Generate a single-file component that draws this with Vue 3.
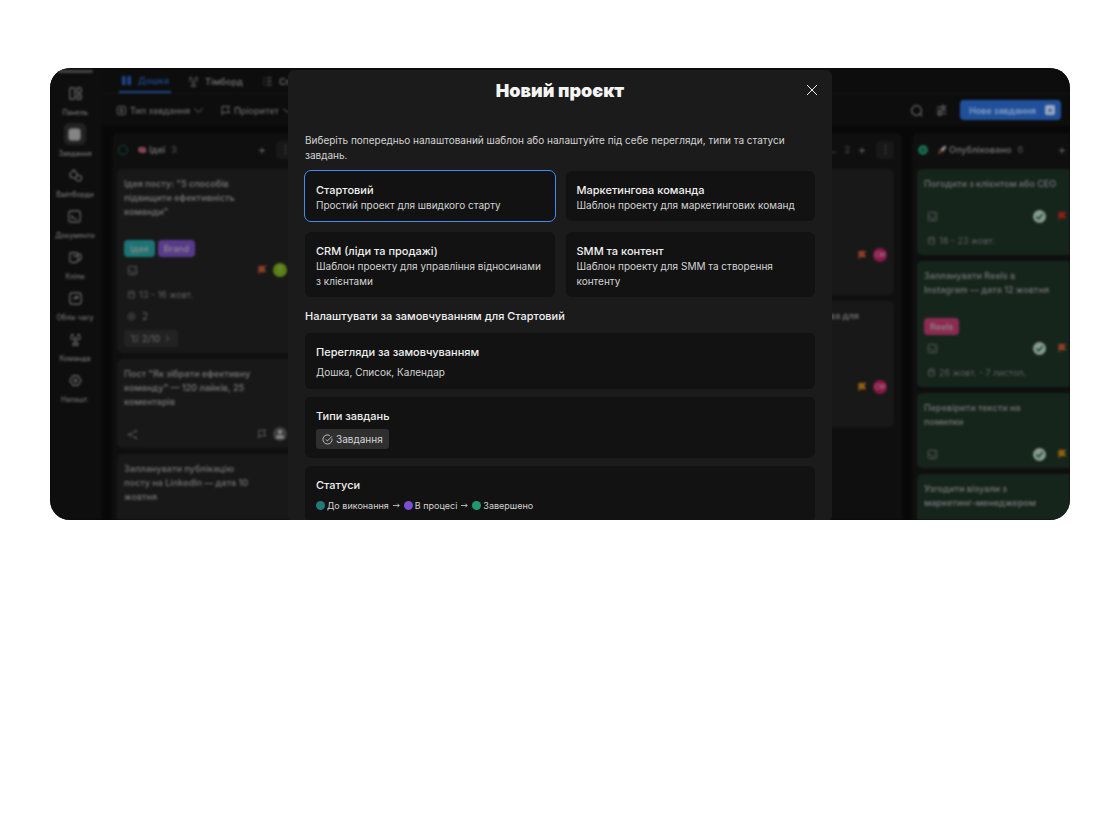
<template>
  <main class="window">
    <div class="app">
      <nav class="sidebar">
        <span class="workspace"></span>
        <a
          v-for="item in navItems"
          :key="item.label"
          href="#"
          class="nav-item"
          :class="{ active: item.active }"
        >
          <span class="nav-icon">
            <svg viewBox="0 0 16 16" class="icon large"><path :d="icons[item.icon]" /></svg>
          </span>
          <span>{{ item.label }}</span>
        </a>
      </nav>

      <div class="content">
        <div class="tabs">
          <button v-for="tab in tabs" :key="tab.label" class="tab" :class="{ active: tab.active }">
            <svg viewBox="0 0 16 16" class="icon"><path :d="icons[tab.icon]" /></svg>
            {{ tab.label }}
          </button>
        </div>

        <div class="toolbar">
          <button class="filter">
            <svg viewBox="0 0 16 16" class="icon"><path :d="icons.grid" /></svg>
            Тип завдання
            <svg viewBox="0 0 16 16" class="icon"><path :d="icons.down" /></svg>
          </button>
          <button class="filter">
            <svg viewBox="0 0 16 16" class="icon"><path :d="icons.flag" /></svg>
            Пріоритет
            <svg viewBox="0 0 16 16" class="icon"><path :d="icons.down" /></svg>
          </button>
          <div class="toolbar-right">
            <button class="icon-button" aria-label="Пошук">
              <svg viewBox="0 0 16 16" class="icon large"><path :d="icons.search" /></svg>
            </button>
            <button class="icon-button" aria-label="Налаштування">
              <svg viewBox="0 0 16 16" class="icon large"><path :d="icons.sliders" /></svg>
            </button>
            <button class="new-task">
              Нове завдання
              <span class="new-task-plus">+</span>
            </button>
          </div>
        </div>

        <div class="board">
          <section v-for="column in columns" :key="column.id" class="column" :class="column.kind">
            <header v-if="column.title" class="column-header">
              <span v-if="column.emoji" class="ring"></span>
              <svg v-if="column.emoji === 'brain'" viewBox="0 0 16 16" class="emoji">
                <path fill="#8e4a57" d="M2 9C1 5 4 2 8 3c4-1 7 2 7 6 0 3-3 4-5 3l-1 2-2-2c-3 0-5-1-5-3z" />
                <path fill="none" stroke="#5c2633" d="M4 8c2-2 3 1 5-1s3 1 4 0M6 5c2-1 3 1 5 0" />
              </svg>
              <svg v-if="column.emoji === 'rocket'" viewBox="0 0 16 16" class="emoji">
                <path fill="#8a8a8a" d="M15 1c-5 0-8 3-10 7l3 3c4-2 7-5 7-10z" />
                <path fill="#8e2f2f" d="M6 6L2 8l3 1zM10 10l-2 4-1-3z" />
                <path fill="#a8701c" d="M4 10l-3 5 5-3z" />
              </svg>
              <span class="column-title">{{ column.title }}</span>
              <span class="column-count">{{ column.count }}</span>
              <button class="column-add" aria-label="Додати">+</button>
              <button class="column-menu" aria-label="Меню">
                <svg viewBox="0 0 16 16" class="icon"><path :d="icons.dots" /></svg>
              </button>
            </header>

            <article v-for="(card, i) in column.cards" :key="i" class="card">
              <h4 class="card-title">{{ card.title }}</h4>
              <div v-if="card.tags" class="tags">
                <span v-for="tag in card.tags" :key="tag.name" class="tag" :class="tag.color">{{ tag.name }}</span>
              </div>
              <div v-if="card.flag" class="card-row">
                <svg viewBox="0 0 16 16" class="icon"><path :d="icons[card.icon || 'image']" /></svg>
                <span v-if="column.kind === 'done'" class="check">
                  <svg viewBox="0 0 16 16"><path d="M4 8l3 3 5-6" /></svg>
                </span>
                <svg viewBox="0 0 16 16" class="icon flag" :class="card.flag"><path :d="icons.flag" /></svg>
                <span class="avatar" :class="card.avatar">
                  <svg v-if="card.avatar === 'grey'" viewBox="0 0 16 16">
                    <path d="M8 3a2 2 0 010 5 2 2 0 010-5zM3 13c0-5 10-5 10 0z" />
                  </svg>
                  <template v-else>{{ card.initials }}</template>
                </span>
              </div>
              <div v-if="card.date" class="card-date">
                <svg viewBox="0 0 16 16" class="icon small"><path :d="icons.calendar" /></svg>
                {{ card.date }}
              </div>
              <div v-if="card.points" class="card-points">
                <svg viewBox="0 0 16 16" class="icon small"><path :d="icons.target" /></svg>
                {{ card.points }}
              </div>
              <button v-if="card.subtasks" class="subtasks">
                <svg viewBox="0 0 16 16" class="icon small"><path :d="icons.tree" /></svg>
                {{ card.subtasks }}
                <svg viewBox="0 0 16 16" class="icon small"><path :d="icons.right" /></svg>
              </button>
            </article>
          </section>
        </div>
      </div>
    </div>

    <div class="overlay">
      <div class="modal" role="dialog" aria-labelledby="modal-title">
        <header class="modal-header">
          <h2 id="modal-title">Новий проєкт</h2>
          <button class="close" aria-label="Закрити">
            <svg viewBox="0 0 12 12"><path d="M1 1l10 10M11 1L1 11" /></svg>
          </button>
        </header>

        <p class="intro">
          Виберіть попередньо налаштований шаблон або налаштуйте під себе перегляди, типи та статуси завдань.
        </p>

        <div class="templates">
          <button
            v-for="template in templates"
            :key="template.name"
            class="template"
            :class="{ selected: template.name === selected }"
            :aria-pressed="template.name === selected"
            @click="selected = template.name"
          >
            <span class="template-name">{{ template.name }}</span>
            <span class="template-text">{{ template.text }}</span>
          </button>
        </div>

        <h3 class="defaults-title">Налаштувати за замовчуванням для {{ selected }}</h3>

        <div class="defaults">
          <section class="panel">
            <h4>Перегляди за замовчуванням</h4>
            <p>Дошка, Список, Календар</p>
          </section>
          <section class="panel">
            <h4>Типи завдань</h4>
            <span class="chip">
              <svg viewBox="0 0 12 12">
                <path d="M10.9 5A5 5 0 118.6 1.7M4 5.8l1.8 1.8L11 2.4" />
              </svg>
              Завдання
            </span>
          </section>
          <section class="panel">
            <h4>Статуси</h4>
            <div class="statuses">
              <template v-for="(status, i) in statuses" :key="status.name">
                <svg v-if="i > 0" class="arrow" viewBox="0 0 8 8"><path d="M0 4h7M5 2l2 2-2 2" /></svg>
                <span class="status"><i class="dot" :class="status.color"></i>{{ status.name }}</span>
              </template>
            </div>
          </section>
        </div>
      </div>
    </div>
  </main>
</template>

<script setup>
import { ref } from 'vue'

const selected = ref('Стартовий')

const templates = [
  { name: 'Стартовий', text: 'Простий проект для швидкого старту' },
  { name: 'Маркетингова команда', text: 'Шаблон проекту для маркетингових команд' },
  { name: 'CRM (ліди та продажі)', text: 'Шаблон проекту для управління відносинами з клієнтами' },
  { name: 'SMM та контент', text: 'Шаблон проекту для SMM та створення контенту' },
]

const statuses = [
  { name: 'До виконання', color: 'teal' },
  { name: 'В процесі', color: 'purple' },
  { name: 'Завершено', color: 'green' },
]

const navItems = [
  { label: 'Панель', icon: 'panel' },
  { label: 'Завдання', icon: 'tasks', active: true },
  { label: 'Вайтборди', icon: 'shapes' },
  { label: 'Документи', icon: 'doc' },
  { label: 'Кліпи', icon: 'clip' },
  { label: 'Облік часу', icon: 'time' },
  { label: 'Команда', icon: 'team' },
  { label: 'Налашт.', icon: 'gear' },
]

const tabs = [
  { label: 'Дошка', icon: 'board', active: true },
  { label: 'Тімборд', icon: 'team' },
  { label: 'Список', icon: 'list' },
]

const columns = [
  {
    id: 1, title: 'Ідеї', count: 3, emoji: 'brain', kind: 'ideas',
    cards: [
      {
        title: 'Ідея посту: "5 способів\nпідвищити ефективність команди"',
        tags: [{ name: 'Ідея', color: 'teal' }, { name: 'Brand', color: 'purple' }],
        flag: 'orange', avatar: 'lime', initials: 'Т', date: '13 - 16 жовт.', points: 2, subtasks: '2/10',
      },
      {
        title: 'Пост "Як зібрати ефективну\nкоманду" — 120 лайків, 25\nкоментарів',
        icon: 'share', flag: 'empty', avatar: 'grey',
      },
      { title: 'Запланувати публікацію\nпосту на LinkedIn — дата 10\nжовтня' },
    ],
  },
  { id: 2, cards: [] },
  { id: 3, cards: [] },
  {
    id: 4, title: '...', count: 2, kind: 'review',
    cards: [
      { flag: 'orange', avatar: 'pink', initials: 'СМ' },
      { title: 'ва для', flag: 'amber', avatar: 'pink', initials: 'СМ' },
    ],
  },
  {
    id: 5, title: 'Опубліковано', count: 6, emoji: 'rocket', kind: 'done',
    cards: [
      { title: 'Погодити з клієнтом або CEO', flag: 'red', date: '18 - 23 жовт.' },
      {
        title: 'Запланувати Reels в\nInstagram — дата 12 жовтня',
        tags: [{ name: 'Reels', color: 'rose' }],
        flag: 'orange', date: '26 жовт. - 7 листоп.',
      },
      { title: 'Перевірити тексти на\nпомилки', flag: 'amber' },
      { title: 'Узгодити візуали з\nмаркетинг-менеджером' },
    ],
  },
]

const icons = {
  panel: 'M2 1h4a1 1 0 011 1v12a1 1 0 01-1 1H2a1 1 0 01-1-1V2a1 1 0 011-1zM10 1h4a1 1 0 011 1v4a1 1 0 01-1 1h-4zM10 10h5v4a1 1 0 01-1 1h-4z',
  tasks: 'M4 1h8a3 3 0 013 3v8a3 3 0 01-3 3H4a3 3 0 01-3-3V4a3 3 0 013-3z',
  shapes: 'M6 1l4 5c1 3-1 5-4 5s-5-2-5-5zM9 7l5 1c1 1 2 3 1 5-2 3-6 2-7-1',
  doc: 'M4 1h8a3 3 0 013 3v8a3 3 0 01-3 3H4a3 3 0 01-3-3V4a3 3 0 013-3zM5 6v4c4-1 4 1 6 2',
  clip: 'M3 2h6a2 2 0 012 2v8a2 2 0 01-2 2H3a2 2 0 01-2-2V4a2 2 0 012-2zM11 4c3-1 4 0 4 3s0 5-4 4M5 6h6',
  time: 'M4 1h8a3 3 0 013 3v8a3 3 0 01-3 3H4a3 3 0 01-3-3V4a3 3 0 013-3zM5 9c1-3 3-3 6-4M11 5v3M8 9l3-4',
  team: 'M4 1v3M12 1v3M2 5c0 4 5 4 5 0M9 5c0 4 5 4 5 0M8 8v3M5 15c0-5 6-5 6 0zM2 3h4M10 3h4',
  gear: 'M5 2h6l4 6-4 6H5L1 8zM8 6a2 2 0 010 4 2 2 0 010-4z',
  board: 'M2 2h4v12H2zM10 2h4v12h-4z',
  list: 'M2 3h2M2 8h2M2 13h2M7 3h7M7 8h7M7 13h7',
  grid: 'M4 2h8a2 2 0 012 2v8a2 2 0 01-2 2H4a2 2 0 01-2-2V4a2 2 0 012-2zM5 6h6M5 10h6M8 5v6',
  down: 'M2 5l6 6 6-6',
  right: 'M5 3l5 5-5 5',
  flag: 'M3 15V2h11l-3 4 3 5H3',
  search: 'M8 2a6 6 0 010 12A6 6 0 018 2zM12 12l3 3',
  sliders: 'M2 4h6M12 4h2M2 12h2M8 12h6M10 2a2 2 0 010 4 2 2 0 010-4zM6 10a2 2 0 010 4 2 2 0 010-4zM2 8h12',
  dots: 'M8 2v2M8 7v2M8 12v2',
  image: 'M3 2h10a1 1 0 011 1v10a1 1 0 01-1 1H3a1 1 0 01-1-1V3a1 1 0 011-1zM2 8c4 0 6 2 7 6M8 11c2-2 4-2 6-1M10 5h2',
  share: 'M13 3L3 8l10 5M12 2h2v2h-2zM2 7h2v2H2zM12 12h2v2h-2z',
  calendar: 'M3 3h10v11H3zM3 7h10M6 1v3M10 1v3',
  target: 'M8 2a6 6 0 010 12A6 6 0 018 2zM5 8h6M8 5v6',
  tree: 'M1 3h6M6 3v10h4M10 3h5M10 8h5M10 13h5',
}
</script>

<style>
body {
  background: #fff;
}
</style>

<style scoped>
.window {
  position: relative;
  margin: 68px 48px 68px 50px;
  aspect-ratio: 1020 / 452;
  overflow: hidden;
  border-radius: 20px;
  background: #080808;
  color: #6c6c6c;
  font-family: Inter, 'Noto Sans', sans-serif;
  font-size: 10px;
}

.window * {
  box-sizing: border-box;
}

h2,
h3,
h4,
p {
  margin: 0;
}

button {
  padding: 0;
  border: 0;
  background: none;
  color: inherit;
  font: inherit;
  text-align: left;
}

/* Board behind the dialog */
.app {
  display: flex;
  height: 100%;
  filter: blur(1px);
}

.sidebar {
  flex: none;
  width: 52px;
  padding: 2px 2px 0 0;
  display: flex;
  flex-direction: column;
  align-items: center;
  background: #0e0e0e;
}

.workspace {
  width: 35px;
  height: 3px;
  margin-bottom: 9px;
  border-radius: 0 0 2px 2px;
  background: #444;
}

.nav-item {
  height: 41px;
  display: flex;
  flex: none;
  flex-direction: column;
  align-items: center;
  color: #707070;
  font-size: 7px;
  font-weight: 500;
  line-height: 14px;
  text-decoration: none;
  white-space: nowrap;
}

.nav-icon {
  width: 22px;
  height: 22px;
  margin-bottom: 2px;
  display: grid;
  place-items: center;
  border-radius: 5px;
}

.nav-item.active .nav-icon {
  background: #222;
}

.nav-item.active path {
  fill: #858585;
}

.icon {
  width: 11px;
  height: 11px;
  flex: none;
  fill: none;
  stroke: currentColor;
  stroke-width: 1.4;
}

.icon.large {
  width: 13px;
  height: 13px;
}

.icon.small {
  width: 9px;
  height: 9px;
}

.content {
  flex: 1;
  min-width: 0;
  display: flex;
  flex-direction: column;
}

.tabs {
  height: 26px;
  flex: none;
  padding: 2px 17px 0;
  display: flex;
  gap: 15px;
  background: #0d0d0d;
  border-bottom: 1px solid #131313;
}

.tab {
  display: flex;
  align-items: center;
  gap: 6px;
  padding: 0 2px;
  font-size: 9px;
  font-weight: 600;
}

.tab.active {
  border-bottom: 2px solid #1d4688;
  color: #1d4688;
}

.tab.active path {
  fill: currentColor;
}

.toolbar {
  height: 32px;
  flex: none;
  padding: 0 9px 0 14px;
  display: flex;
  align-items: center;
  gap: 16px;
  background: #0d0d0d;
}

.filter {
  display: flex;
  align-items: center;
  gap: 3px;
  font-size: 9px;
  font-weight: 500;
}

.toolbar-right {
  margin-left: auto;
  display: flex;
  align-items: center;
  gap: 12px;
}

.icon-button {
  display: flex;
}

.new-task {
  height: 20px;
  padding: 0 6px 0 9px;
  display: flex;
  align-items: center;
  gap: 9px;
  border-radius: 4px;
  background: #21509a;
  color: #829cc2;
  font-size: 9px;
  font-weight: 600;
}

.new-task-plus {
  width: 10px;
  height: 10px;
  border-radius: 2px;
  background: #9aa9c0;
  color: #21509a;
  line-height: 10px;
  text-align: center;
}

.board {
  flex: 1;
  min-height: 0;
  padding: 7px 10px 0;
  display: flex;
  gap: 10px;
  overflow: hidden;
}

.column {
  flex: none;
  width: 190px;
  padding: 0 8px 0 5px;
  display: flex;
  flex-direction: column;
  gap: 6px;
  border-radius: 6px 6px 0 0;
  background: #0f0f0f;
}

.column-header {
  height: 30px;
  flex: none;
  display: flex;
  align-items: center;
  padding: 3px 0 0 1px;
  font-weight: 600;
}

.ring {
  width: 10px;
  height: 10px;
  margin-right: 9px;
  border: 1px solid #0f4a3d;
  border-radius: 50%;
}

.done .ring {
  border: 4px solid #17684a;
}

.emoji {
  width: 10px;
  height: 10px;
  margin-right: 2px;
}

.column-title {
  font-size: 9px;
}

.column-count {
  margin: 0 auto 0 6px;
  color: #444;
  font-size: 9px;
}

.review .column-title {
  margin-left: auto;
}

.review .column-count {
  margin: 0 8px;
}

.column-add {
  width: 9px;
  font-size: 12px;
  font-weight: 400;
}

.column-menu {
  width: 18px;
  height: 18px;
  margin-left: 9px;
  display: grid;
  place-items: center;
  border-radius: 4px;
  background: #181818;
}

.card {
  flex: none;
  padding: 8px 7px 6px;
  border-radius: 5px;
  background: #181818;
}

.ideas .card:last-child,
.done .card:last-child {
  flex: 1 0 auto;
  border-radius: 5px 5px 0 0;
}

.done .card {
  background: #15251c;
}

.review .card {
  min-height: 126px;
}

.card-title {
  min-height: 14px;
  padding-right: 18px;
  font-size: 9px;
  font-weight: 600;
  line-height: 14px;
  white-space: pre-line;
}

.review .card-title {
  margin-bottom: 56px;
  padding-right: 28px;
  text-align: right;
}

.done .card-title {
  padding-right: 0;
}

.tags {
  margin-top: 21px;
  display: flex;
  gap: 3px;
}

.tag {
  height: 17px;
  padding: 0 6px;
  border-radius: 4px;
  color: #8a8a8a;
  font-size: 9px;
  font-weight: 500;
  line-height: 17px;
}

.tag.teal {
  background: #1d7474;
}

.tag.purple {
  background: #583a8c;
}

.tag.rose {
  background: #8c2a50;
}

.card-row {
  height: 16px;
  margin-top: 17px;
  padding-left: 3px;
  display: flex;
  align-items: center;
}

.card-row > .icon:first-child {
  margin-right: auto;
  color: #5a5a5a;
}

.tags + .card-row {
  margin-top: 5px;
}

.flag {
  width: 10px;
  height: 10px;
}

.flag path {
  fill: currentColor;
}

.flag.orange {
  color: #8c3f28;
}

.flag.amber {
  color: #92600f;
}

.flag.red {
  color: #8c2013;
}

.flag.empty path {
  fill: none;
}

.check {
  width: 13px;
  height: 13px;
  margin-right: 11px;
  border-radius: 50%;
  background: #8a9a90;
}

.check svg {
  display: block;
  fill: none;
  stroke: #17502e;
  stroke-width: 2;
}

.avatar {
  width: 14px;
  height: 14px;
  margin-left: 6px;
  border-radius: 50%;
  color: #b08a9a;
  font-size: 6px;
  line-height: 14px;
  text-align: center;
}

.avatar.lime {
  background: #5a8018;
  color: #a0b070;
}

.avatar.grey {
  background: #3f3f3f;
}

.avatar.grey svg {
  display: block;
  fill: #8c8c8c;
}

.avatar.pink {
  background: #861a46;
}

.card-date,
.card-points {
  display: flex;
  align-items: center;
  gap: 3px;
  padding-left: 3px;
  color: #5f5f5f;
  font-size: 9px;
}

.card-date {
  height: 17px;
  margin-top: 8px;
}

.card-points {
  height: 16px;
  margin-top: 5px;
  gap: 6px;
  font-size: 10px;
}

.subtasks {
  height: 17px;
  margin-top: 6px;
  padding: 0 6px;
  display: flex;
  align-items: center;
  gap: 3px;
  border-radius: 3px;
  background: #222;
  font-size: 9px;
}

/* Dialog */
.overlay {
  position: absolute;
  inset: 2px 0 0;
  display: flex;
  justify-content: center;
}

.modal {
  width: 544px;
  max-width: 90%;
  min-height: 100%;
  align-self: flex-start;
  padding: 0 17px;
  border-radius: 6px;
  background: #1b1b1b;
  color: #d4d4d4;
}

.modal-header {
  height: 40px;
  display: grid;
  grid-template-columns: 1fr auto 1fr;
  align-items: center;
}

.modal-header h2 {
  grid-column: 2;
  color: #f4f4f4;
  font-size: 18px;
  font-weight: 900;
}

.close {
  justify-self: end;
  width: 12px;
  height: 12px;
  margin-right: -3px;
}

.close svg {
  display: block;
  stroke: #eee;
}

.intro {
  margin: 23px 0 8px;
  line-height: 15px;
}

.templates {
  display: grid;
  grid-template-columns: 1fr 1fr;
  gap: 11px;
}

.template {
  padding: 12px 11px 8px;
  border-radius: 6px;
  background: #121212;
  line-height: 15px;
  display: flex;
  flex-direction: column;
  cursor: pointer;
}

.template.selected {
  outline: 1px solid #3f8cf5;
}

.template-name {
  color: #f0f0f0;
  font-size: 11px;
  font-weight: 500;
}

.defaults-title {
  margin: 12px 0 9px;
  color: #f0f0f0;
  font-size: 11px;
  font-weight: 500;
  line-height: 15px;
}

.defaults {
  display: flex;
  flex-direction: column;
  gap: 8px;
}

.panel {
  padding: 12px 11px 9px;
  border-radius: 6px;
  background: #121212;
  line-height: 15px;
}

.panel h4 {
  margin-bottom: 5px;
  color: #f0f0f0;
  font-size: 11px;
  font-weight: 500;
}

.chip {
  width: fit-content;
  height: 20px;
  padding: 0 6px;
  display: flex;
  align-items: center;
  gap: 3px;
  border-radius: 3px;
  background: #2f2f2f;
}

.chip svg {
  width: 11px;
  height: 11px;
  fill: none;
  stroke: #c8c8c8;
}

.statuses {
  display: flex;
  align-items: center;
  gap: 4px;
  font-size: 9px;
}

.status {
  display: flex;
  align-items: center;
  gap: 2px;
}

.dot {
  width: 9px;
  height: 9px;
  border-radius: 50%;
}

.dot.teal {
  background: #207a78;
}

.dot.purple {
  background: #7a4fd0;
}

.dot.green {
  background: #1f9a6c;
}

.arrow {
  width: 7px;
  height: 7px;
  fill: none;
  stroke: #c8c8c8;
}
</style>
